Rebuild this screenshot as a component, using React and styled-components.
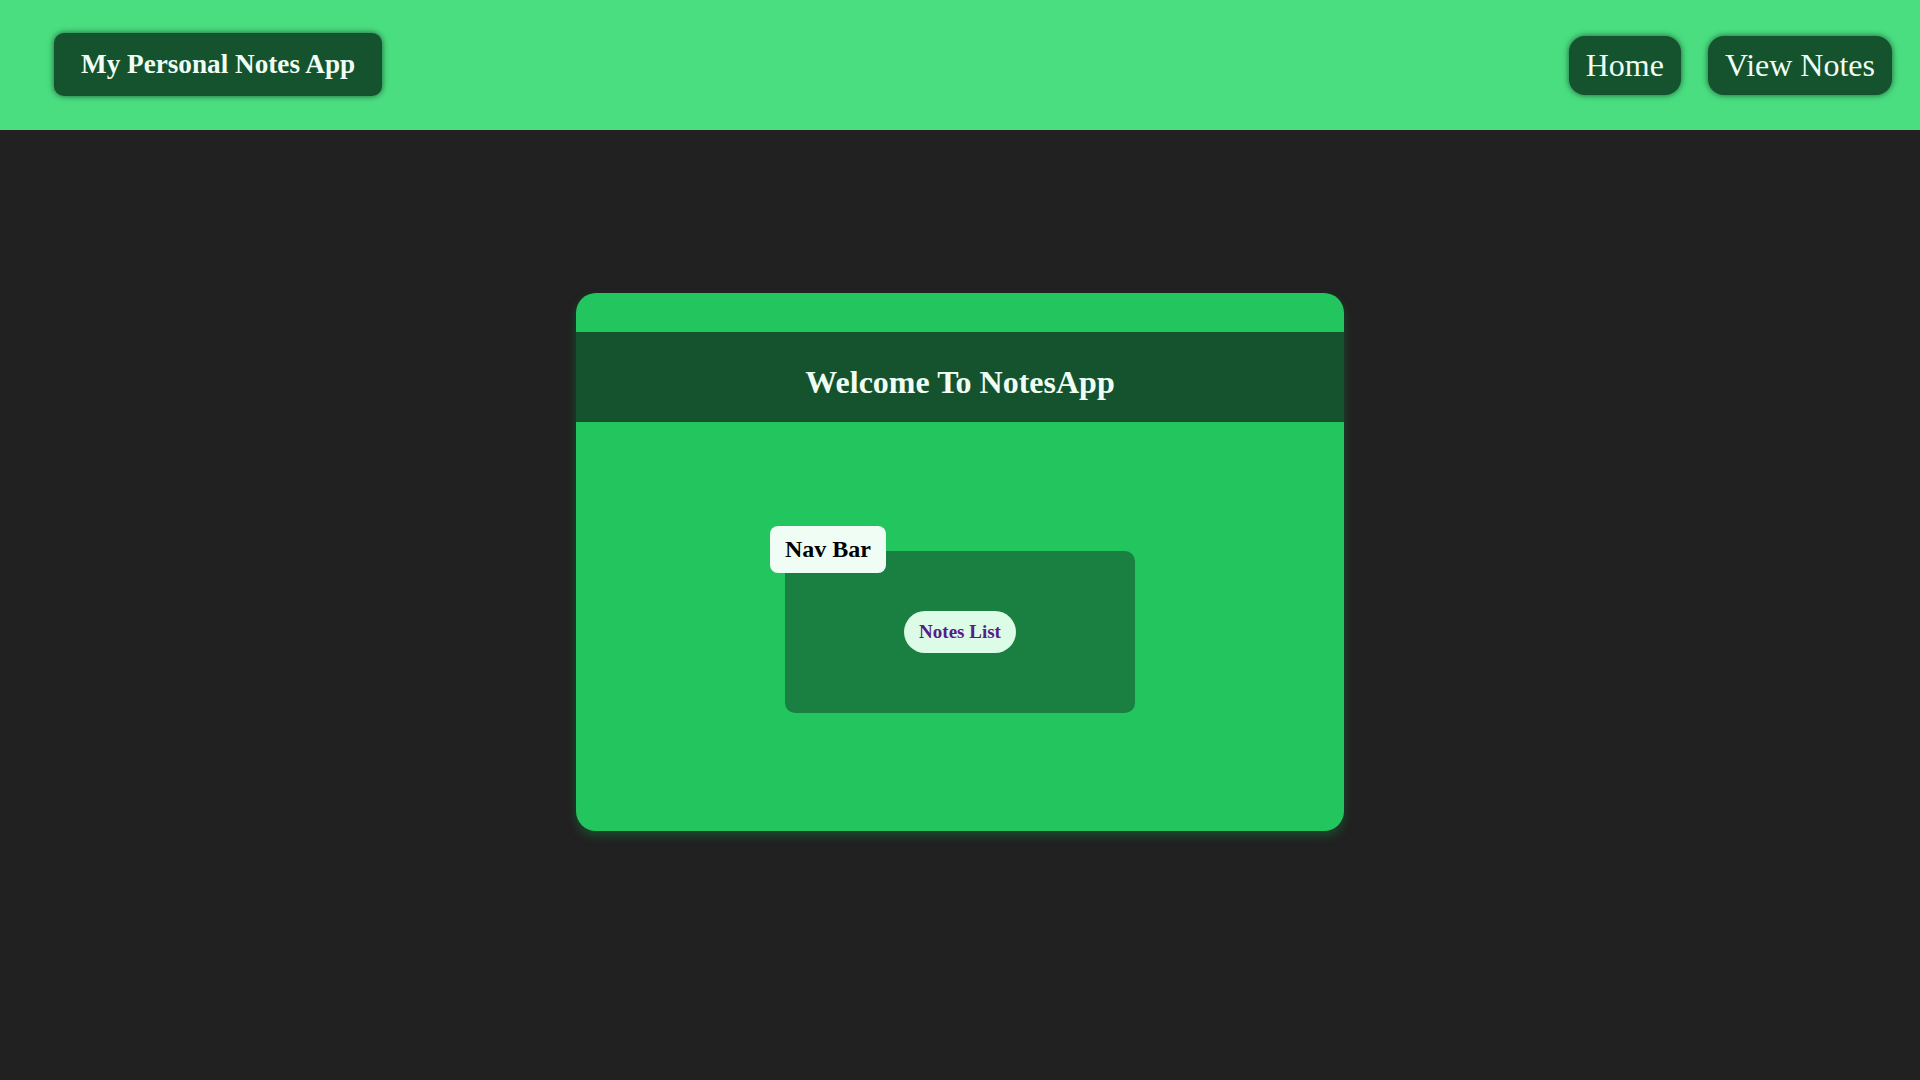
import React from "react";
import styled, { createGlobalStyle } from "styled-components";

const GlobalStyle = createGlobalStyle`
  html, body {
    margin: 0;
    padding: 0;
    background-color: #212121;
    font-family: "Liberation Serif", "Times New Roman", serif;
  }
`;

const Page = styled.div`
  min-height: 1080px;
  background-color: #212121;
`;

const Header = styled.header`
  height: 130px;
  background-color: #4ade80;
  display: flex;
  align-items: center;
  justify-content: space-between;
  padding: 0 28px 0 54px;
  box-sizing: border-box;
`;

const DarkButton = styled.button`
  background-color: #14532d;
  color: #f0fdf4;
  border: 0;
  font-family: inherit;
  box-shadow: 0 0 6px rgba(0, 0, 0, 0.6);
  cursor: pointer;
  line-height: 1.15;
`;

const Brand = styled(DarkButton)`
  height: 63px;
  padding: 0 27px;
  border-radius: 10px;
  font-size: 27.2px;
  font-weight: 700;
  margin-top: -1px;
`;

const NavLinks = styled.nav`
  display: flex;
  gap: 27px;
`;

const NavButton = styled(DarkButton)`
  height: 59px;
  padding: 0 17px;
  border-radius: 16px;
  font-size: 32px;
  font-weight: 400;
`;

const Card = styled.section`
  width: 768px;
  margin: 163px auto 0;
  padding-top: 39px;
  background-color: #22c55e;
  border-radius: 20px;
  box-shadow: 0 5px 10px rgba(22, 101, 52, 0.6);
  overflow: hidden;
`;

const Banner = styled.div`
  height: 90px;
  background-color: #14532d;
  display: flex;
  align-items: center;
  justify-content: center;
`;

const Title = styled.h1`
  margin: 0;
  padding-top: 10px;
  font-size: 32px;
  font-weight: 700;
  color: #f0fdf4;
`;

const CardBody = styled.div`
  display: flex;
  justify-content: center;
  padding: 129px 0 118px;
`;

const Frame = styled.div`
  position: relative;
  width: 350px;
  height: 162px;
  background-color: #1a8042;
  border-radius: 10px;
  display: flex;
  align-items: center;
  justify-content: center;
`;

const Tag = styled.span`
  position: absolute;
  left: -15px;
  top: -25px;
  background-color: #f0fdf4;
  color: #000;
  font-size: 24px;
  font-weight: 700;
  padding: 9px 15px 10px;
  border-radius: 8px;
  line-height: 28px;
`;

const Pill = styled.span`
  background-color: #dcfce7;
  color: #581c87;
  font-size: 19px;
  font-weight: 700;
  padding: 0 15px;
  height: 42px;
  display: inline-flex;
  align-items: center;
  border-radius: 21px;
`;

export default function App() {
  return (
    <Page>
      <GlobalStyle />
      <Header>
        <Brand>My Personal Notes App</Brand>
        <NavLinks>
          <NavButton>Home</NavButton>
          <NavButton>View Notes</NavButton>
        </NavLinks>
      </Header>
      <Card>
        <Banner>
          <Title>Welcome To NotesApp</Title>
        </Banner>
        <CardBody>
          <Frame>
            <Tag>Nav Bar</Tag>
            <Pill>Notes List</Pill>
          </Frame>
        </CardBody>
      </Card>
    </Page>
  );
}
